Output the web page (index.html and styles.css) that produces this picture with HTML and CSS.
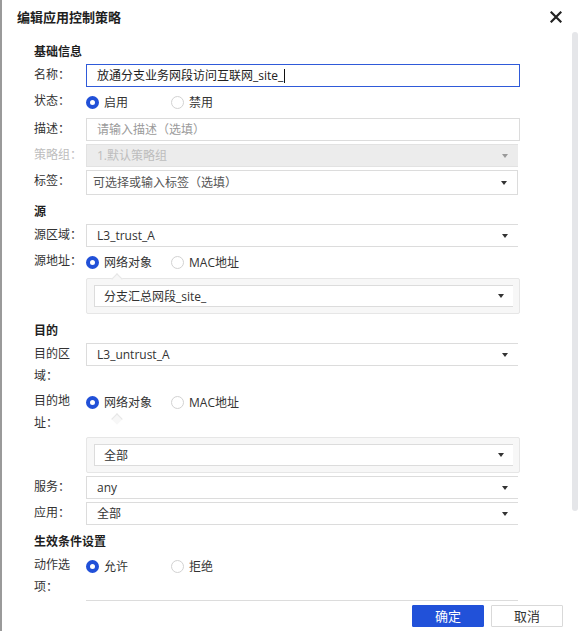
FILE: index.html
```html
<!DOCTYPE html>
<html lang="zh-CN">
<head>
<meta charset="utf-8">
<title>编辑应用控制策略</title>
<link rel="stylesheet" href="styles.css">
</head>
<body>
<div class="dialog">
  <div class="header">
    <div class="title">编辑应用控制策略</div>
    <span class="close" aria-label="关闭">
      <svg width="12" height="12" viewBox="0 0 12 12"><path d="M1.5 1.5 L10.5 10.5 M10.5 1.5 L1.5 10.5" stroke="#222" stroke-width="2.2" stroke-linecap="square" fill="none"/></svg>
    </span>
  </div>

  <div class="content">
    <div class="section first">基础信息</div>
    <div class="row">
      <div class="label">名称：</div>
      <div class="control"><div class="box focus">放通分支业务网段访问互联网_site_<span class="caret"></span></div></div>
    </div>
    <div class="row">
      <div class="label">状态：</div>
      <div class="control">
        <div class="radios">
          <span class="radio-item"><span class="dot on"></span>启用</span>
          <span class="radio-item"><span class="dot"></span>禁用</span>
        </div>
      </div>
    </div>
    <div class="row">
      <div class="label">描述：</div>
      <div class="control"><div class="box placeholder">请输入描述（选填）</div></div>
    </div>
    <div class="row">
      <div class="label muted">策略组：</div>
      <div class="control"><div class="box select clip disabled">1.默认策略组<span class="arrow"></span></div></div>
    </div>
    <div class="row">
      <div class="label">标签：</div>
      <div class="control"><div class="box select tags">可选择或输入标签（选填）<span class="arrow"></span></div></div>
    </div>

    <div class="section">源</div>
    <div class="row">
      <div class="label">源区域：</div>
      <div class="control"><div class="box select clip">L3_trust_A<span class="arrow"></span></div></div>
    </div>
    <div class="row">
      <div class="label">源地址：</div>
      <div class="control">
        <div class="radios">
          <span class="radio-item"><span class="dot on"></span>网络对象</span>
          <span class="radio-item"><span class="dot"></span>MAC地址</span>
        </div>
        <span class="pointer"></span>
      </div>
    </div>
    <div class="row">
      <div class="label"></div>
      <div class="control">
        <div class="panel"><div class="box select inner">分支汇总网段_site_<span class="arrow"></span></div></div>
      </div>
    </div>

    <div class="section">目的</div>
    <div class="row">
      <div class="label">目的区域：</div>
      <div class="control"><div class="box select clip">L3_untrust_A<span class="arrow"></span></div></div>
    </div>
    <div class="row">
      <div class="label">目的地址：</div>
      <div class="control">
        <div class="radios">
          <span class="radio-item"><span class="dot on"></span>网络对象</span>
          <span class="radio-item"><span class="dot"></span>MAC地址</span>
        </div>
        <span class="pointer"></span>
      </div>
    </div>
    <div class="row">
      <div class="label"></div>
      <div class="control">
        <div class="panel"><div class="box select inner">全部<span class="arrow"></span></div></div>
      </div>
    </div>
    <div class="row">
      <div class="label">服务：</div>
      <div class="control"><div class="box select clip">any<span class="arrow"></span></div></div>
    </div>
    <div class="row">
      <div class="label">应用：</div>
      <div class="control"><div class="box select clip">全部<span class="arrow"></span></div></div>
    </div>

    <div class="section">生效条件设置</div>
    <div class="row last">
      <div class="label">动作选项：</div>
      <div class="control">
        <div class="radios">
          <span class="radio-item"><span class="dot on"></span>允许</span>
          <span class="radio-item"><span class="dot"></span>拒绝</span>
        </div>
      </div>
    </div>
    <div class="row">
      <div class="label"></div>
      <div class="control"><div class="endline"></div></div>
    </div>
  </div>

  <div class="footer">
    <button class="btn primary">确定</button>
    <button class="btn">取消</button>
  </div>

  <div class="scrollbar"></div>
</div>
</body>
</html>
```

FILE: styles.css
```css
* {
  box-sizing: border-box;
  margin: 0;
  padding: 0;
}

html, body {
  width: 578px;
  height: 631px;
  overflow: hidden;
  background: #fff;
}

body {
  font-family: "Open Sans", "Noto Sans CJK SC", sans-serif;
  font-size: 12px;
  color: #333;
}

.dialog {
  position: relative;
  height: 631px;
  border-left: 2px solid #9a9a9a;
  display: flex;
  flex-direction: column;
  background: #fff;
}

.header {
  height: 34px;
  flex: none;
  display: flex;
  align-items: center;
  justify-content: space-between;
  padding: 0 16px 0 15px;
}

.title {
  font-size: 13px;
  font-weight: 700;
  color: #1f1f1f;
  line-height: 20px;
}

.close {
  width: 12px;
  height: 12px;
  display: flex;
}

.content {
  flex: 1;
  min-height: 0;
  overflow: hidden;
  padding: 8px 0 0 32px;
  display: flex;
  flex-direction: column;
}

.section {
  flex: none;
  height: 20px;
  line-height: 20px;
  font-weight: 700;
  color: #1f1f1f;
  margin: 4px 0 2px;
}

.section.first {
  margin-top: 0;
}

.row {
  flex: none;
  display: flex;
  margin-bottom: 3px;
}

.row.last {
  margin-bottom: 2px;
}

.label {
  width: 52px;
  flex: none;
  line-height: 22px;
  color: #333;
}

.label.muted {
  color: #bdbdbd;
}

.control {
  position: relative;
  width: 434px;
}

.box {
  height: 23px;
  border: 1px solid #dcdcdc;
  background: #fff;
  display: flex;
  align-items: center;
  padding: 0 10px;
  line-height: 21px;
  color: #333;
  white-space: nowrap;
}

.box.focus {
  border-color: #2f5ad9;
  color: #222;
}

.caret {
  display: inline-block;
  width: 1px;
  height: 14px;
  background: #111;
  margin-left: 1px;
}

.box.placeholder {
  color: #9a9a9a;
}

.box.clip {
  width: 432px;
  border-right: none;
}

.box.disabled {
  background: #ececec;
  border-color: #e2e2e2;
  color: #bdbdbd;
}

.box.tags {
  width: 432px;
  height: 25px;
  padding-left: 6px;
  color: #555;
}

.arrow {
  margin-left: auto;
  width: 0;
  height: 0;
  border-left: 3px solid transparent;
  border-right: 3px solid transparent;
  border-top: 4px solid #333;
}

.disabled .arrow {
  border-top-color: #999;
}

.radios {
  display: flex;
  align-items: center;
  height: 25px;
}

.radio-item {
  display: flex;
  align-items: center;
  min-width: 85px;
  line-height: 20px;
  color: #333;
}

.dot {
  width: 13px;
  height: 13px;
  border-radius: 50%;
  border: 1px solid #d2d2d2;
  background: #fff;
  margin-right: 5px;
  flex: none;
}

.dot.on {
  border: 4px solid #2150d8;
}

.pointer {
  position: absolute;
  left: 27px;
  top: 25px;
  width: 8px;
  height: 8px;
  background: #f7f7f7;
  border-top: 1px solid #e6e6e6;
  border-left: 1px solid #e6e6e6;
  transform: rotate(45deg);
  z-index: 1;
}

.panel {
  width: 434px;
  border: 1px solid #e6e6e6;
  border-radius: 2px;
  background: #f7f7f7;
  padding: 6px 0 6px 7px;
}

.box.inner {
  width: 419px;
  height: 22px;
  border-right: none;
  padding: 0 9px 0 9px;
}

.endline {
  width: 432px;
  height: 20px;
  border-top: 1px solid #dcdcdc;
}

.footer {
  height: 30px;
  flex: none;
  display: flex;
  justify-content: flex-end;
  gap: 7px;
  padding: 4px 15px 0 0;
  background: #fff;
}

.btn {
  width: 72px;
  height: 22px;
  border: 1px solid #d9d9d9;
  background: #fff;
  color: #333;
  font-family: "Open Sans", "Noto Sans CJK SC", sans-serif;
  font-size: 13px;
  line-height: 20px;
  border-radius: 1px;
}

.btn.primary {
  background: #2151d9;
  border-color: #2151d9;
  color: #fff;
}

.scrollbar {
  position: absolute;
  right: 0;
  top: 32px;
  width: 6px;
  height: 479px;
  border-radius: 3px;
  background: #e5e6e9;
}
```
